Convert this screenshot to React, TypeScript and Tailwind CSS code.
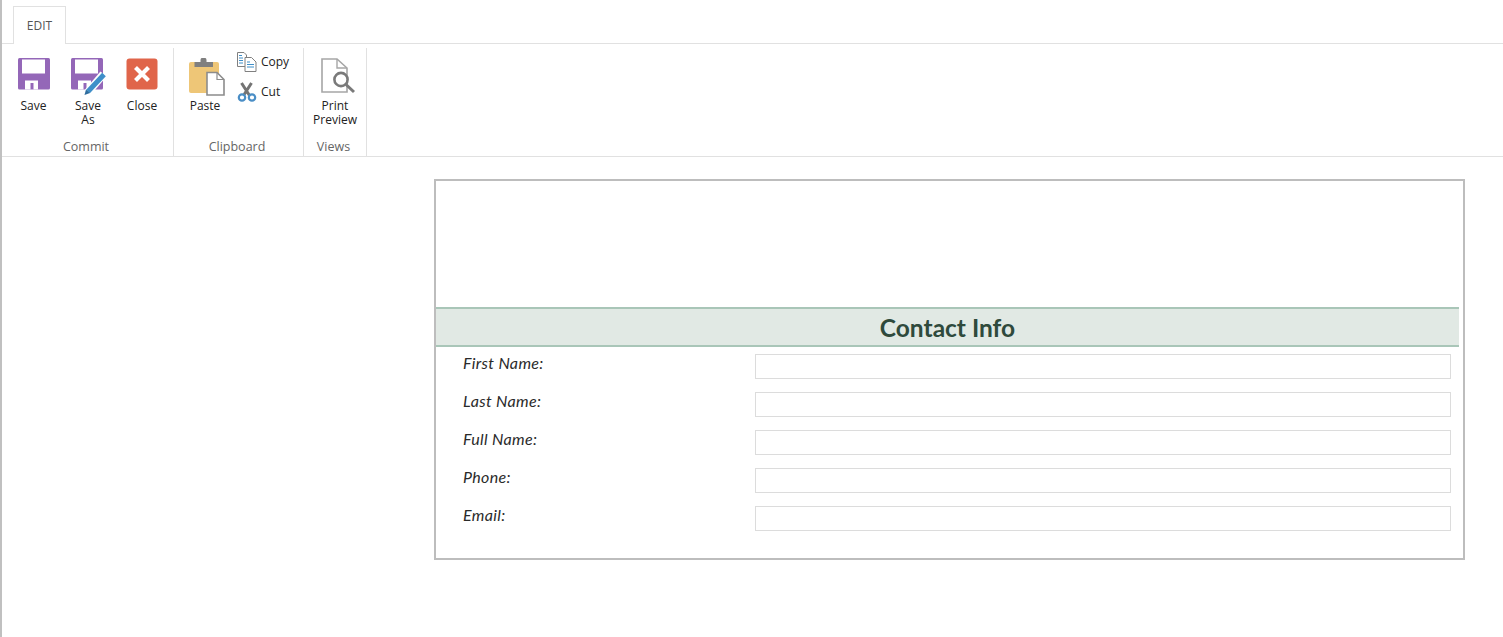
const ribbonFont = "font-['Open_Sans','Noto_Sans',sans-serif]";

function Floppy() {
  return (
    <>
      <rect x="0" y="0" width="32" height="31.5" rx="1.5" fill="#9467b8" />
      <rect x="4" y="1.5" width="23" height="14" fill="#fff" />
      <path d="M7 31.5V22.5H20V31.5H15.5V25H12.5V31.5Z" fill="#fff" />
    </>
  );
}

function SaveIcon() {
  return (
    <svg width="32" height="32" viewBox="0 0 32 32">
      <Floppy />
    </svg>
  );
}

function SaveAsIcon() {
  return (
    <svg width="38" height="38" viewBox="0 0 38 38">
      <Floppy />
      <path d="M15 36.5L32.5 16" stroke="#fff" strokeWidth="8" />
      <path d="M17 33.5L33 16.5" stroke="#3f8fc9" strokeWidth="5" />
      <path d="M13.5 37L15 31.5L19 35Z" fill="#2f6d9e" />
    </svg>
  );
}

function CloseIcon() {
  return (
    <svg width="32" height="32" viewBox="0 0 32 32">
      <rect x="0.5" y="0.5" width="31" height="31" rx="3" fill="#e0654a" />
      <path d="M9.5 9.5L22.5 22.5M22.5 9.5L9.5 22.5" stroke="#fff" strokeWidth="4.2" />
    </svg>
  );
}

function PasteIcon() {
  return (
    <svg width="36" height="38" viewBox="0 0 36 38">
      <rect x="0" y="4" width="30" height="31" rx="2" fill="#eec677" />
      <path d="M5.5 9V4H11.5V2A2.5 2 0 0 1 17.5 2V4H24V9Z" fill="#7f7f7f" />
      <path d="M18 14.5H28L35 21.5V37H18Z" fill="#fff" stroke="#8c8c8c" strokeWidth="1.6" />
      <path d="M28 14.5V21.5H35" fill="none" stroke="#8c8c8c" strokeWidth="1.2" />
    </svg>
  );
}

function CopyIcon() {
  return (
    <svg width="20" height="20" viewBox="0 0 20 20">
      <path d="M0.5 0.5H7L9.5 3V14.5H0.5Z" fill="#fff" stroke="#808080" />
      <path d="M2 6H6M2 8.5H6M2 11H6M2 3.5H5" stroke="#3f8fc9" />
      <path d="M8 5.5H14.5L19 10V19.5H8Z" fill="#fff" stroke="#808080" />
      <path d="M10 10H13M10 12.5H17M10 15H17" stroke="#3f8fc9" />
    </svg>
  );
}

function CutIcon() {
  return (
    <svg width="20" height="20" viewBox="0 0 20 20">
      <path d="M4.5 1L12.5 13.5M14.5 1L6.5 13.5" stroke="#747474" strokeWidth="3" />
      <circle cx="5" cy="15.5" r="3.2" fill="#fff" stroke="#4a8ec6" strokeWidth="2.2" />
      <circle cx="15" cy="15.5" r="3.2" fill="#fff" stroke="#4a8ec6" strokeWidth="2.2" />
    </svg>
  );
}

function PreviewIcon() {
  return (
    <svg width="36" height="37" viewBox="0 0 36 37">
      <path d="M2 1H17L27 10V34H2Z" fill="#fff" stroke="#a6a6a6" strokeWidth="1.6" />
      <path d="M17 1V10H27" fill="none" stroke="#a6a6a6" strokeWidth="1.4" />
      <circle cx="21" cy="21.5" r="6.6" fill="#fff" stroke="#7a7a7a" strokeWidth="2.6" />
      <path d="M26 26.5L34 34" stroke="#7a7a7a" strokeWidth="3" />
    </svg>
  );
}

function LargeButton({ icon, label, width }: { icon: React.ReactNode; label: string[]; width: string }) {
  return (
    <div className={`flex flex-col items-center ${width}`}>
      <div className="flex h-[41px] w-full items-start justify-center">{icon}</div>
      <div className="text-center text-[12px] leading-[14px] text-[#222]">
        {label.map((line) => (
          <div key={line}>{line}</div>
        ))}
      </div>
    </div>
  );
}

function Group({ title, width, children }: { title: string; width: string; children: React.ReactNode }) {
  return (
    <div className={`flex h-[108px] flex-col border-r border-[#e1e1e1] ${width}`}>
      <div className="h-[89px] pt-[10px]">{children}</div>
      <div className="pr-[3px] text-center text-[12.5px] leading-[19px] text-[#666]">{title}</div>
    </div>
  );
}

const fields = ["First Name:", "Last Name:", "Full Name:", "Phone:", "Email:"];

export default function App() {
  return (
    <div className="h-[637px] w-[1503px] overflow-hidden border-l-2 border-[#c0c0c0] bg-white">
      <div className={`flex h-[44px] items-end border-b border-[#e1e1e1] pl-[11px] ${ribbonFont}`}>
        <div className="-mb-px flex h-[38px] w-[53px] items-center justify-center border border-b-0 border-[#e1e1e1] bg-white text-[12px] text-[#555]">
          EDIT
        </div>
      </div>

      <div className={`flex h-[113px] border-b border-[#e1e1e1] pt-[4px] ${ribbonFont}`}>
        <Group title="Commit" width="w-[172px]">
          <div className="flex pl-[8px]">
            <LargeButton width="w-[47px]" icon={<SaveIcon />} label={["Save"]} />
            <LargeButton width="w-[62px]" icon={<div className="pl-[3px]"><SaveAsIcon /></div>} label={["Save", "As"]} />
            <LargeButton width="w-[46px]" icon={<CloseIcon />} label={["Close"]} />
          </div>
        </Group>
        <Group title="Clipboard" width="w-[130px]">
          <div className="flex pl-[13px]">
            <LargeButton width="w-[36px]" icon={<div className="pl-[4px]"><PasteIcon /></div>} label={["Paste"]} />
            <div className="-mt-[6px] ml-[14px] flex flex-col gap-[10px]">
              <div className="flex h-[20px] items-center gap-[4px] text-[12px] text-[#222]">
                <CopyIcon />
                <span>Copy</span>
              </div>
              <div className="flex h-[20px] items-center gap-[4px] text-[12px] text-[#222]">
                <CutIcon />
                <span>Cut</span>
              </div>
            </div>
          </div>
        </Group>
        <Group title="Views" width="w-[63px]">
          <LargeButton width="w-full" icon={<div className="pl-[6px]"><PreviewIcon /></div>} label={["Print", "Preview"]} />
        </Group>
      </div>

      <div className="ml-[432px] mt-[22px] h-[381px] w-[1031px] border-2 border-[#bdbdbd] font-['Lato','Open_Sans',sans-serif]">
        <div className="h-[126px]" />
        <div className="flex h-[40px] w-[1023px] items-center justify-center border-y-2 border-[#a9c6b8] bg-[#e1e9e4] pt-[2px] text-[24.5px] font-bold text-[#2f4a3c]">
          Contact Info
        </div>
        <div className="flex flex-col gap-[13px] pl-[27px] pt-[7px]">
          {fields.map((name) => (
            <div key={name} className="flex h-[25px]">
              <div className="w-[292px] text-[16px] italic leading-[17px] tracking-[0.35px] text-[#2a2a2a]">{name}</div>
              <input className="h-[25px] w-[696px] border border-[#dcdcdc] bg-white outline-none" />
            </div>
          ))}
        </div>
      </div>
    </div>
  );
}
